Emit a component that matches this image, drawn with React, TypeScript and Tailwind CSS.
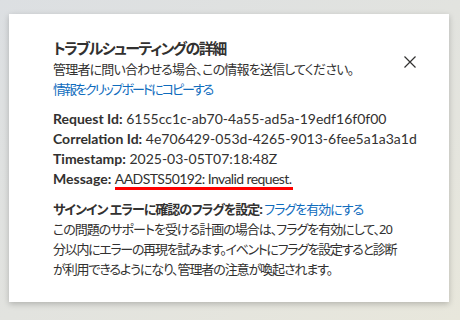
const details = [
  { label: 'Request Id:', value: '6155cc1c-ab70-4a55-ad5a-19edf16f0f00' },
  { label: 'Correlation Id:', value: '4e706429-053d-4265-9013-6fee5a1a3a1d' },
  { label: 'Timestamp:', value: '2025-03-05T07:18:48Z' },
];

function App() {
  return (
    <div className="w-[460px] h-[320px] bg-gradient-to-br from-[#dcdfe2] to-[#e8e7dc] pt-[14px] pl-[9px] font-['Noto_Sans','Noto_Sans_CJK_JP',sans-serif] [font-feature-settings:'palt'] text-[#323130]">
      <div className="relative w-[440px] h-[288px] bg-white shadow-[0_2px_6px_rgba(0,0,0,0.22)] pt-[23px] pl-[44px] whitespace-nowrap">
        <button className="absolute top-[42px] left-[395px] flex h-[12px] w-[12px] items-center justify-center text-[#323130]">
          <svg width="12" height="12" viewBox="0 0 12 12" fill="none" stroke="currentColor" strokeWidth="1.2">
            <path d="M0.5 0.5 L11.5 11.5 M11.5 0.5 L0.5 11.5" />
          </svg>
        </button>

        <h2 className="text-[15px] leading-[22px] font-bold tracking-[-1.5px]">トラブルシューティングの詳細</h2>
        <p className="text-[13px] leading-[20px] tracking-[-0.8px]">管理者に問い合わせる場合、この情報を送信してください。</p>
        <a className="block text-[13px] leading-[20px] tracking-[-2px] text-[#0f6cbd]">情報をクリップボードにコピーする</a>

        <div className="mt-[10px] font-['Lato',sans-serif] text-[14px] leading-[20px]">
          {details.map(d => (
            <div key={d.label}>
              <span className="font-bold">{d.label}</span> {d.value}
            </div>
          ))}
          <div>
            <span className="font-bold">Message:</span>{' '}
            <span className="relative tracking-[-0.6px]">
              AADSTS50192: Invalid request.
              <span className="absolute left-0 -right-[2px] -bottom-[3px] h-[3px] bg-[#ff0000]" />
            </span>
          </div>
        </div>

        <div className="mt-[10px] text-[13px] leading-[20px]">
          <div className="tracking-[-1px]">
            <span className="font-bold">サインイン エラーに確認のフラグを設定:</span>{' '}
            <a className="text-[#0f6cbd]">フラグを有効にする</a>
          </div>
          <p className="tracking-[-1px]">この問題のサポートを受ける計画の場合は、フラグを有効にして、20</p>
          <p className="tracking-[-1.3px]">分以内にエラーの再現を試みます。イベントにフラグを設定すると診断</p>
          <p className="tracking-[-1.1px]">が利用できるようになり、管理者の注意が喚起されます。</p>
        </div>
      </div>
    </div>
  );
}

export default App;
